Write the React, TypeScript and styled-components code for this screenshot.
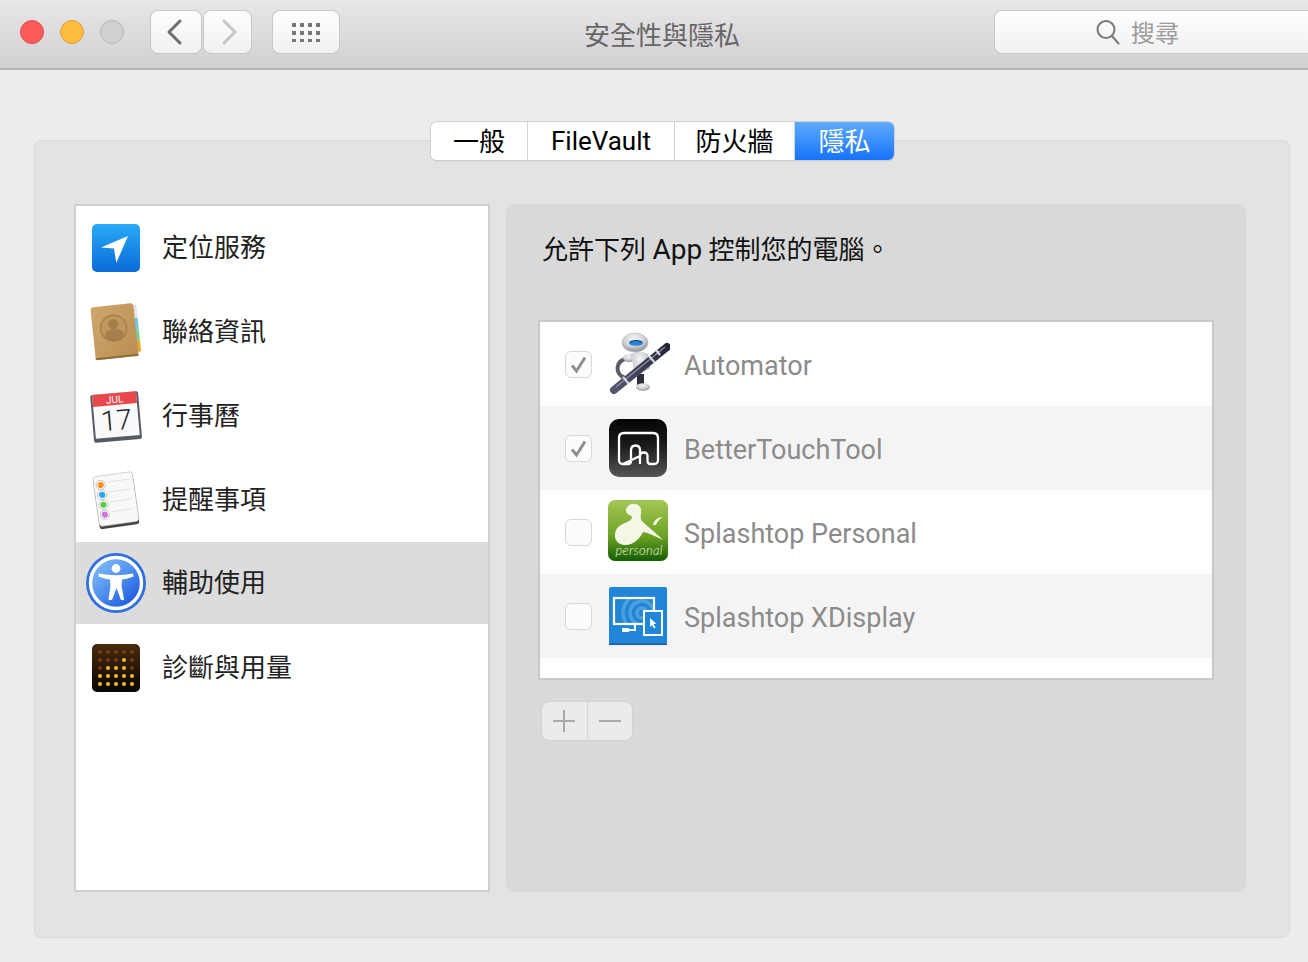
import React from "react";
import styled, { createGlobalStyle } from "styled-components";

const Global = createGlobalStyle`
  html, body { margin: 0; padding: 0; background: #ececec; }
  body { font-family: "Roboto", "Noto Sans CJK TC", sans-serif; overflow: hidden; }
  * { box-sizing: border-box; }
`;

const Window = styled.div`
  width: 1308px;
  height: 962px;
  display: flex;
  flex-direction: column;
  background: #ececec;
  overflow: hidden;
`;

const Toolbar = styled.header`
  height: 70px;
  flex: none;
  display: flex;
  align-items: flex-start;
  padding: 11px 0 0 20px;
  background: linear-gradient(#e8e6e8, #d2d0d2);
  border-bottom: 2px solid #b4b3b4;
  overflow: hidden;
`;

const Lights = styled.div`
  display: flex;
  gap: 16px;
  margin-top: 9px;
  margin-right: 27px;
`;

const Light = styled.span<{ $bg: string; $edge: string }>`
  width: 24px;
  height: 24px;
  border-radius: 50%;
  background: ${(p) => p.$bg};
  border: 1px solid ${(p) => p.$edge};
`;

const ToolButton = styled.div<{ $w: number; $ml?: number }>`
  width: ${(p) => p.$w}px;
  height: 42px;
  margin-left: ${(p) => p.$ml ?? 0}px;
  flex: none;
  display: flex;
  align-items: center;
  justify-content: center;
  border-radius: 7px;
  background: linear-gradient(#fdfdfd, #f1f1f1);
  box-shadow: 0 0 0 1px #c9c8c9, 0 1px 0 #b9b8b9;
`;

const Title = styled.h1`
  width: 306px;
  flex: none;
  margin: 7px 0 0 170px;
  font-size: 26px;
  line-height: 32px;
  font-weight: 400;
  text-align: center;
  color: #666;
  font-family: "Noto Sans CJK TC", sans-serif;
`;

const Search = styled.div`
  width: 330px;
  height: 42px;
  margin-left: 180px;
  flex: none;
  display: flex;
  align-items: center;
  justify-content: flex-start;
  padding-left: 101px;
  gap: 11px;
  border-radius: 7px 0 0 7px;
  background: linear-gradient(#fdfdfd, #f1f1f1);
  box-shadow: 0 0 0 1px #c9c8c9, 0 1px 0 #b9b8b9;
  color: #9c9c9c;
  font-size: 24px;
  font-family: "Noto Sans CJK TC", sans-serif;
`;

const SearchLabel = styled.span`
  margin-bottom: 2px;
`;

const Main = styled.main`
  flex: 1;
  padding: 70px 18px 24px 34px;
`;

const Panel = styled.section`
  height: 798px;
  background: #e3e3e3;
  border: 1px solid #dadada;
  border-radius: 7px;
  padding: 0 43px 0 39px;
`;

const Tabs = styled.nav`
  width: 463px;
  height: 38px;
  margin: -19px 0 44px 357px;
  display: flex;
  border-radius: 6px;
  background: #fff;
  box-shadow: 0 0 0 1px #cfcfcf, 0 1px 1px #aaa;
  overflow: hidden;
`;

const Tab = styled.div<{ $w: number; $active?: boolean; $cjk?: boolean }>`
  width: ${(p) => p.$w}px;
  height: 100%;
  flex: none;
  display: flex;
  align-items: center;
  justify-content: center;
  padding-bottom: ${(p) => (p.$cjk ? 4 : 0)}px;
  font-size: 26px;
  color: ${(p) => (p.$active ? "#fff" : "#000")};
  background: ${(p) => (p.$active ? "linear-gradient(#5eabfb, #1673fb)" : "#fff")};
  border-right: ${(p) => (p.$active ? "none" : "1px solid #d4d4d4")};
`;

const Columns = styled.div`
  display: flex;
  gap: 16px;
  height: 688px;
`;

const Sidebar = styled.ul`
  width: 416px;
  margin: 0;
  padding: 0;
  list-style: none;
  background: #fff;
  border: 2px solid #cfcfcf;
`;

const SideRow = styled.li<{ $active?: boolean }>`
  height: ${(p) => (p.$active ? 82 : 84)}px;
  margin-bottom: ${(p) => (p.$active ? 2 : 0)}px;
  display: flex;
  align-items: center;
  color: #222;
  font-size: 26px;
  background: ${(p) => (p.$active ? "#dcdcdc" : "transparent")};
`;

const SideIcon = styled.span`
  width: 80px;
  flex: none;
  display: flex;
  align-items: center;
  justify-content: center;
  svg { display: block; }
`;

const SideLabel = styled.span`
  margin-left: 6px;
  margin-bottom: 6px;
  font-family: "Noto Sans CJK TC", sans-serif;
`;

const Detail = styled.section`
  width: 740px;
  background: #d9d9d9;
  border-radius: 7px;
  padding: 26px 32px 0 32px;
`;

const Heading = styled.h2`
  margin: 0 0 51px 4px;
  height: 39px;
  font-size: 26px;
  line-height: 39px;
  font-weight: 400;
  color: #111;
  white-space: nowrap;
`;

const LatinRun = styled.span`
  font-size: 28px;
`;

const AppList = styled.ul`
  width: 676px;
  height: 360px;
  margin: 0;
  padding: 0;
  list-style: none;
  background: #fff;
  border: 2px solid #c9c9c9;
`;

const AppRow = styled.li<{ $alt?: boolean }>`
  height: 84px;
  display: flex;
  align-items: center;
  padding-left: 25px;
  background: ${(p) => (p.$alt ? "#f4f4f4" : "#fff")};
`;

const Check = styled.span`
  width: 27px;
  height: 27px;
  flex: none;
  border-radius: 6px;
  border: 1px solid #d8d8d8;
  background: #fbfbfb;
  display: flex;
  align-items: center;
  justify-content: center;
`;

const AppIcon = styled.span`
  width: 64px;
  height: 64px;
  margin-left: 14px;
  flex: none;
  svg { display: block; }
`;

const AppName = styled.span`
  margin-left: 14px;
  margin-top: 4px;
  font-size: 27px;
  color: #8b8b8b;
`;

const PlusMinus = styled.div`
  width: 90px;
  height: 38px;
  margin: 22px 0 0 4px;
  display: flex;
  border-radius: 7px;
  background: #ebebeb;
  box-shadow: 0 0 0 1px #d2d2d2, 0 1px 0 #c4c4c4;
`;

const PMButton = styled.div<{ $divider?: boolean }>`
  flex: 1;
  display: flex;
  align-items: center;
  justify-content: center;
  border-right: ${(p) => (p.$divider ? "1px solid #d6d6d6" : "none")};
`;

const Chevron = ({ d, color }: { d: string; color: string }) => (
  <svg width="20" height="28" viewBox="0 0 20 28" fill="none">
    <path d={d} stroke={color} strokeWidth="3" strokeLinecap="round" strokeLinejoin="round" />
  </svg>
);

const GridGlyph = () => (
  <svg width="30" height="20" viewBox="0 0 30 20" fill="#777">
    {[0, 8, 16].flatMap((y) =>
      [0, 8, 16, 24].map((x) => <rect key={`${x}-${y}`} x={x + 1} y={y + 1} width="4" height="4" />)
    )}
  </svg>
);

const SearchGlyph = () => (
  <svg width="24" height="26" viewBox="0 0 24 26" fill="none" stroke="#777" strokeWidth="2">
    <circle cx="10" cy="10.5" r="8.5" />
    <path d="M16 17l6.5 7.5" strokeLinecap="round" />
  </svg>
);

const LocationIcon = () => (
  <svg width="48" height="48" viewBox="0 0 48 48">
    <defs>
      <linearGradient id="loc" x1="0" y1="0" x2="0" y2="1">
        <stop offset="0" stopColor="#29aaf6" />
        <stop offset="1" stopColor="#0a6bd8" />
      </linearGradient>
    </defs>
    <rect width="48" height="48" rx="5" fill="url(#loc)" />
    <path d="M36 12 9 23.5l13 1L24.3 39z" fill="#fff" />
  </svg>
);

const ContactsIcon = () => (
  <svg width="56" height="62" viewBox="0 0 56 62">
    <defs>
      <linearGradient id="book" x1="0" y1="0" x2="1" y2="1">
        <stop offset="0" stopColor="#cfa76c" />
        <stop offset="1" stopColor="#b98e52" />
      </linearGradient>
    </defs>
    <g transform="rotate(-6 28 31)">
      <rect x="46" y="6" width="5" height="13" fill="#e4e4e4" />
      <rect x="46" y="19" width="5" height="12" fill="#6ec7e6" />
      <rect x="46" y="31" width="5" height="11" fill="#7fd08a" />
      <rect x="46" y="42" width="5" height="11" fill="#e3ab35" />
      <rect x="5" y="4" width="43" height="53" rx="3" fill="url(#book)" />
      <rect x="5" y="55" width="43" height="2" fill="#8e6a38" />
      <circle cx="26" cy="27" r="13" fill="#bd9660" stroke="#a9824d" strokeWidth="1.5" />
      <circle cx="26" cy="23" r="5" fill="#a57f4b" />
      <path d="M16 36c1-7 5-8 10-8s9 1 10 8c-3 3-7 4-10 4s-7-1-10-4z" fill="#a57f4b" />
    </g>
  </svg>
);

const CalendarIcon = () => (
  <svg width="56" height="56" viewBox="0 0 56 56">
    <g transform="rotate(-5 28 28)">
      <rect x="4" y="5" width="48" height="48" rx="2" fill="#555b63" />
      <rect x="6" y="5" width="44" height="44" fill="#fafafa" />
      <rect x="6" y="5" width="44" height="12" fill="#e8474c" />
      <text x="28" y="15" textAnchor="middle" fontSize="10" fontFamily="Roboto, sans-serif" fill="#fff">JUL</text>
      <text x="28" y="42" textAnchor="middle" fontSize="28" fontWeight="300" fontFamily="Roboto, sans-serif" fill="#222">17</text>
    </g>
  </svg>
);

const RemindersIcon = () => (
  <svg width="52" height="60" viewBox="0 0 52 60">
    <g transform="rotate(-8 26 30)">
      <rect x="6" y="5" width="40" height="52" rx="3" fill="#444" />
      <rect x="6" y="4" width="40" height="50" rx="3" fill="#f8f8f8" stroke="#bbb" strokeWidth="0.6" />
      {[
        [13, "#f7941d"],
        [23, "#22a7f0"],
        [33, "#5ccb3a"],
        [43, "#cf73d9"],
      ].map(([y, c]) => (
        <g key={String(y)}>
          <circle cx="13" cy={Number(y)} r="4.6" fill="#fff" stroke="#bbb" strokeWidth="0.8" />
          <circle cx="13" cy={Number(y)} r="3.1" fill={String(c)} />
          <path d={`M20 ${Number(y) - 2}H42`} stroke="#ddd" strokeWidth="0.8" />
        </g>
      ))}
    </g>
  </svg>
);

const AccessIcon = () => (
  <svg width="62" height="62" viewBox="0 0 62 62">
    <defs>
      <linearGradient id="acc" x1="0.15" y1="0.1" x2="0.85" y2="0.9">
        <stop offset="0" stopColor="#7fb9f6" />
        <stop offset="0.5" stopColor="#4f8fee" />
        <stop offset="1" stopColor="#1b57dc" />
      </linearGradient>
    </defs>
    <circle cx="31" cy="31" r="30" fill="#2f6fe3" />
    <circle cx="31" cy="31" r="25.5" fill="url(#acc)" stroke="#fff" strokeWidth="3.4" />
    <circle cx="31" cy="16.5" r="4.4" fill="#fff" />
    <path d="M14 21.5Q31 25 48 21.5L48.5 24.5Q42 27 37 27.5L36.5 34 39 47Q39 48.5 37 48H36L31.5 36 27 48H25Q23 48.5 23.5 47L25.5 34 25 27.5Q20 27 13.500 24.5Z" fill="#fff" />
  </svg>
);

const DiagIcon = () => {
  const bright = ["1-3", "2-1", "2-2", "2-3"];
  return (
    <svg width="48" height="48" viewBox="0 0 48 48">
      <defs>
        <linearGradient id="diag" x1="0" y1="0" x2="0" y2="1">
          <stop offset="0" stopColor="#4a2a0c" />
          <stop offset="1" stopColor="#070504" />
        </linearGradient>
      </defs>
      <rect width="48" height="48" rx="5" fill="url(#diag)" />
      {[0, 1, 2, 3, 4].flatMap((r) =>
        [0, 1, 2, 3, 4].map((c) => (
          <circle
            key={`${r}-${c}`}
            cx={8 + c * 8}
            cy={8 + r * 8}
            r="2"
            fill={r >= 3 || bright.includes(`${r}-${c}`) ? "#f2bd28" : "#6b3d12"}
          />
        ))
      )}
    </svg>
  );
};

const CheckMark = () => (
  <svg width="19" height="19" viewBox="0 0 19 19" fill="none">
    <path d="M3 10.5 7.5 16 16 2.5" stroke="#8f8f8f" strokeWidth="3" />
  </svg>
);

const AutomatorIcon = () => (
  <svg width="64" height="64" viewBox="-4 0 64 64">
    <defs>
      <radialGradient id="bot" cx="0.45" cy="0.3" r="0.75">
        <stop offset="0" stopColor="#f3f3f5" />
        <stop offset="0.55" stopColor="#cfd0d5" />
        <stop offset="1" stopColor="#80828a" />
      </radialGradient>
      <linearGradient id="tube" x1="0" y1="1" x2="1" y2="0">
        <stop offset="0" stopColor="#55576e" />
        <stop offset="1" stopColor="#24253a" />
      </linearGradient>
    </defs>
    <path d="M19 26C5 28 4 42 15 46" fill="none" stroke="#5a5b64" strokeWidth="4" />
    <rect x="27" y="42" width="7" height="11" fill="#2d2e38" />
    <ellipse cx="33" cy="55" rx="7" ry="3.8" fill="url(#bot)" />
    <ellipse cx="19" cy="26" rx="6" ry="4" fill="url(#bot)" />
    <path d="M21 22Q29 17 38 22L40 36 25 45z" fill="url(#bot)" />
    <ellipse cx="25" cy="10.5" rx="13" ry="9.5" fill="url(#bot)" stroke="#b4b5ba" strokeWidth="0.6" />
    <ellipse cx="26" cy="11" rx="7" ry="2.8" fill="#2580d8" />
    <path d="M20 10Q26 7 32 10" stroke="#1c3a66" strokeWidth="1.2" fill="none" />
    <path d="M4 58 57 15" stroke="url(#tube)" strokeWidth="8" strokeLinecap="round" />
    <path d="M6 55 55 15" stroke="#8f91a4" strokeWidth="1.2" />
    <path d="M39 24l6 7M46 18l4 5M13 45l6 7" stroke="#d8d8de" strokeWidth="2.2" />
  </svg>
);

const BttIcon = () => (
  <svg width="64" height="64" viewBox="-3 -3 64 64">
    <defs>
      <linearGradient id="btt" x1="0" y1="0" x2="0" y2="1">
        <stop offset="0" stopColor="#050505" />
        <stop offset="0.45" stopColor="#1a1a1a" />
        <stop offset="1" stopColor="#555" />
      </linearGradient>
    </defs>
    <rect width="58" height="58" rx="10" fill="url(#btt)" />
    <path
      d="M14 45H19Q22 45 22 42V31.5Q22 26.5 26.5 26.5 31 26.5 31 31.5V45M31 37Q31 33.5 34.7 33.5 38.5 33.5 38.5 37V42Q38.5 45 41.5 45H45Q49 45 49 41V19Q49 14 44 14H15Q10 14 10 19V41Q10 45 14 45Z"
      fill="none"
      stroke="#fff"
      strokeWidth="2.3"
    />
  </svg>
);

const PersonalIcon = () => (
  <svg width="64" height="64" viewBox="0 2 64 64">
    <defs>
      <linearGradient id="sp" x1="0" y1="0" x2="0" y2="1">
        <stop offset="0" stopColor="#a4c655" />
        <stop offset="0.6" stopColor="#6ba223" />
        <stop offset="1" stopColor="#155e05" />
      </linearGradient>
    </defs>
    <rect x="2" y="2" width="60" height="61" rx="7" fill="url(#sp)" />
    <path d="M20 11C23 4 33 4 35 11 36 16 33 19 36 23 40 27 50 35 57 42 49 38 43 35 37 34 34 41 26 48 18 47 10 46 7 39 10 32 13 25 24 25 26 20 27 16 19 18 20 11Z" fill="#f4f7e6" />
    <path d="M47 27C48 22 52 19 57 19 53 21 51 24 50 27Z" fill="#f4f7e6" />
    <text x="33" y="57" textAnchor="middle" fontSize="13" fontStyle="italic" fontWeight="300" textLength="47" fontFamily="Lato, sans-serif" fill="#eef3de">personal</text>
  </svg>
);

const XDisplayIcon = () => (
  <svg width="64" height="64" viewBox="0 0 64 64">
    <defs>
      <clipPath id="screen">
        <rect x="9" y="15" width="38" height="24" />
      </clipPath>
    </defs>
    <rect x="3" y="3" width="58" height="58" rx="2" fill="#2186d8" />
    <rect x="3" y="59.5" width="58" height="1.5" fill="#1a5f9c" />
    <g fill="none" stroke="#4f9fe0" strokeWidth="3.5" clipPath="url(#screen)">
      <circle cx="36" cy="29" r="5" />
      <circle cx="36" cy="29" r="12" />
      <circle cx="36" cy="29" r="19" />
    </g>
    <rect x="8" y="14" width="40" height="26" fill="none" stroke="#fff" strokeWidth="2.2" />
    <path d="M29 40V46H22" fill="none" stroke="#fff" strokeWidth="2" />
    <rect x="16" y="44" width="7" height="4" fill="#fff" />
    <rect x="38" y="27" width="18" height="24" fill="#2186d8" stroke="#fff" strokeWidth="2" />
    <path d="M44 34v9l2-2 2 3.5 1.5-1-2-3.5h3z" fill="#fff" />
  </svg>
);

const sideItems = [
  { label: "定位服務", icon: <LocationIcon /> },
  { label: "聯絡資訊", icon: <ContactsIcon /> },
  { label: "行事曆", icon: <CalendarIcon /> },
  { label: "提醒事項", icon: <RemindersIcon /> },
  { label: "輔助使用", icon: <AccessIcon />, active: true },
  { label: "診斷與用量", icon: <DiagIcon /> },
];

const apps = [
  { name: "Automator", icon: <AutomatorIcon />, checked: true },
  { name: "BetterTouchTool", icon: <BttIcon />, checked: true },
  { name: "Splashtop Personal", icon: <PersonalIcon />, checked: false },
  { name: "Splashtop XDisplay", icon: <XDisplayIcon />, checked: false },
];

const tabs = [
  { label: "一般", w: 97, cjk: true },
  { label: "FileVault", w: 147 },
  { label: "防火牆", w: 120, cjk: true },
  { label: "隱私", w: 99, active: true, cjk: true },
];

export default function App() {
  return (
    <Window>
      <Global />
      <Toolbar>
        <Lights>
          <Light $bg="#fc5b57" $edge="#e24b46" />
          <Light $bg="#fdbc40" $edge="#e1a02f" />
          <Light $bg="#d0d0d0" $edge="#b8b8b8" />
        </Lights>
        <ToolButton $w={50} $ml={0}>
          <Chevron d="M14 3 3 14 14 25" color="#6e6e6e" />
        </ToolButton>
        <ToolButton $w={47} $ml={3}>
          <Chevron d="M6 3 17 14 6 25" color="#c6c6c6" />
        </ToolButton>
        <ToolButton $w={66} $ml={22}>
          <GridGlyph />
        </ToolButton>
        <Title>安全性與隱私</Title>
        <Search>
          <SearchGlyph />
          <SearchLabel>搜尋</SearchLabel>
        </Search>
      </Toolbar>
      <Main>
        <Panel>
          <Tabs>
            {tabs.map((t) => (
              <Tab key={t.label} $w={t.w} $active={t.active} $cjk={t.cjk}>
                {t.label}
              </Tab>
            ))}
          </Tabs>
          <Columns>
            <Sidebar>
              {sideItems.map((s) => (
                <SideRow key={s.label} $active={s.active}>
                  <SideIcon>{s.icon}</SideIcon>
                  <SideLabel>{s.label}</SideLabel>
                </SideRow>
              ))}
            </Sidebar>
            <Detail>
              <Heading>
                允許下列 <LatinRun>App</LatinRun> 控制您的電腦。
              </Heading>
              <AppList>
                {apps.map((a, i) => (
                  <AppRow key={a.name} $alt={i % 2 === 1}>
                    <Check>{a.checked && <CheckMark />}</Check>
                    <AppIcon>{a.icon}</AppIcon>
                    <AppName>{a.name}</AppName>
                  </AppRow>
                ))}
              </AppList>
              <PlusMinus>
                <PMButton $divider>
                  <svg width="24" height="24" viewBox="0 0 24 24" stroke="#a9a9a9" strokeWidth="2">
                    <path d="M12 1v22M1 12h22" />
                  </svg>
                </PMButton>
                <PMButton>
                  <svg width="24" height="24" viewBox="0 0 24 24" stroke="#a9a9a9" strokeWidth="2">
                    <path d="M1 12h22" />
                  </svg>
                </PMButton>
              </PlusMinus>
            </Detail>
          </Columns>
        </Panel>
      </Main>
    </Window>
  );
}
